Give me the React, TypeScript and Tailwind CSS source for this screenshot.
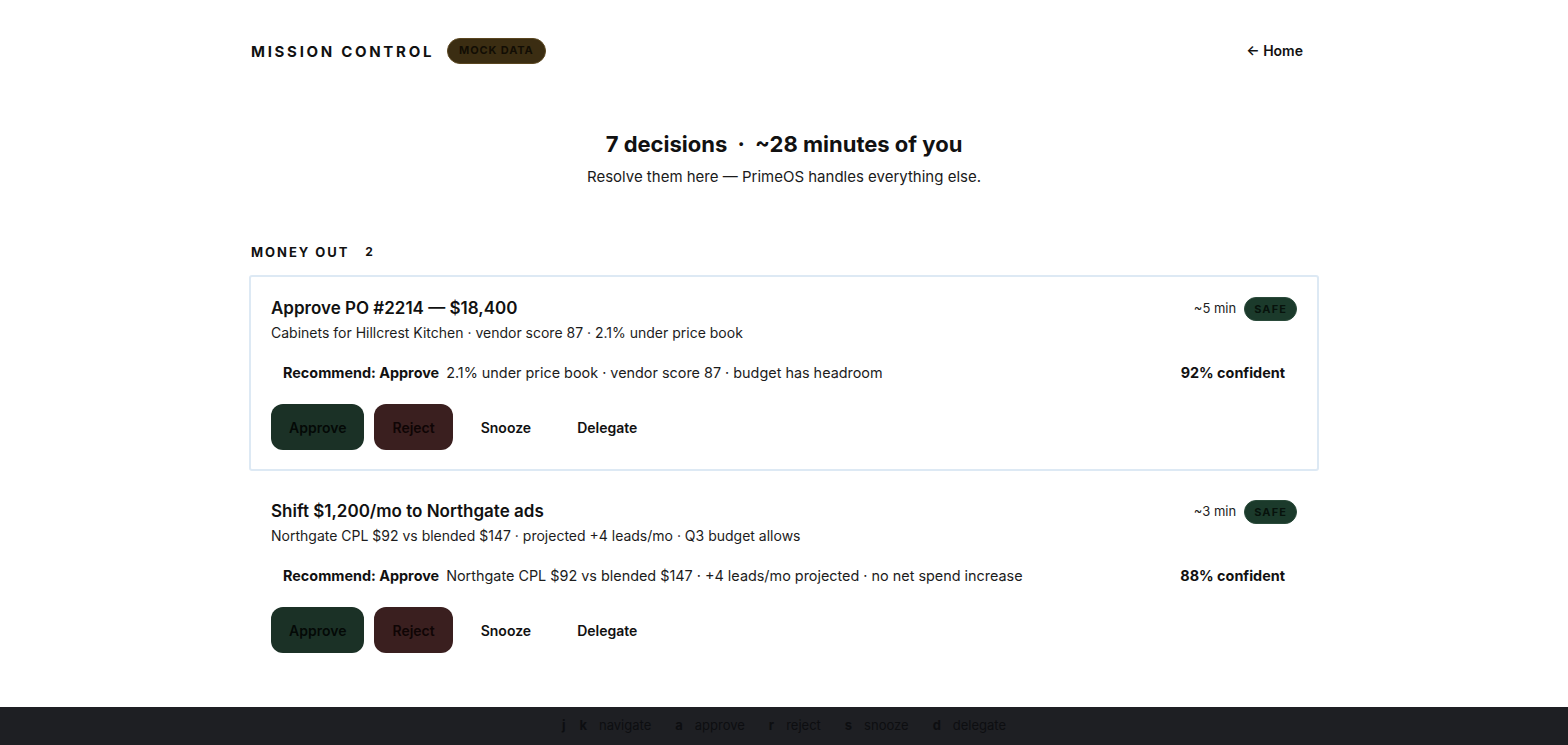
import { useState } from "react";

type Decision = {
    id: string;
    title: string;
    detail: string;
    minutes: number;
    risk: "SAFE";
    recommend: string;
    reason: string;
    confidence: number;
};

const decisions: Decision[] = [
    {
        id: "po-2214",
        title: "Approve PO #2214 — $18,400",
        detail: "Cabinets for Hillcrest Kitchen · vendor score 87 · 2.1% under price book",
        minutes: 5,
        risk: "SAFE",
        recommend: "Approve",
        reason: "2.1% under price book · vendor score 87 · budget has headroom",
        confidence: 92,
    },
    {
        id: "northgate-ads",
        title: "Shift $1,200/mo to Northgate ads",
        detail: "Northgate CPL $92 vs blended $147 · projected +4 leads/mo · Q3 budget allows",
        minutes: 3,
        risk: "SAFE",
        recommend: "Approve",
        reason: "Northgate CPL $92 vs blended $147 · +4 leads/mo projected · no net spend increase",
        confidence: 88,
    },
];

const shortcuts = [
    { keys: ["j", "k"], label: "navigate" },
    { keys: ["a"], label: "approve" },
    { keys: ["r"], label: "reject" },
    { keys: ["s"], label: "snooze" },
    { keys: ["d"], label: "delegate" },
];

const DecisionCard = ({ d, selected, onSelect }: { d: Decision; selected: boolean; onSelect: () => void }) => {
    return (
        <div
            onClick={onSelect}
            className={`border-2 rounded-[3px] px-[20px] pt-[19px] pb-[19px] ${selected ? "border-[#dde9f4]" : "border-transparent"}`}
        >
            <div className="flex flex-row items-start justify-between">
                <div>
                    <div className="text-[17px] leading-6 font-semibold text-[#111]">{d.title}</div>
                    <div className="text-[14px] leading-5 mt-[3px] text-[#1c1c1c]">{d.detail}</div>
                </div>
                <div className="flex flex-row items-center gap-2 pt-px">
                    <span className="text-[13px] text-[#222]">~{d.minutes} min</span>
                    <span className="h-6 px-[9px] rounded-full bg-[#1b3a2b] border border-[#2a4a3a] text-[11px] font-bold tracking-[0.1em] text-[#07120c] flex items-center">
                        {d.risk}
                    </span>
                </div>
            </div>
            {/* recommendation strip */}
            <div className="mt-3 px-3 py-2 flex flex-row items-center justify-between text-[14.4px] leading-5">
                <div className="flex flex-row gap-[7px]">
                    <span className="font-bold text-[#111]">Recommend: {d.recommend}</span>
                    <span className="text-[#1c1c1c]">{d.reason}</span>
                </div>
                <span className="font-bold text-[#111]">{d.confidence}% confident</span>
            </div>
            <div className="mt-[13px] flex flex-row gap-[10px] text-[14px] font-semibold">
                <button className="h-[46px] px-[18px] rounded-xl bg-[#1b3126] text-[#040906]">Approve</button>
                <button className="h-[46px] px-[18px] rounded-xl bg-[#3a1f1f] text-[#0f0505]">Reject</button>
                <button className="h-[46px] px-[18px] rounded-xl text-[#111]">Snooze</button>
                <button className="h-[46px] px-[18px] rounded-xl text-[#111]">Delegate</button>
            </div>
        </div>
    );
};

const App = () => {
    const [selected, setSelected] = useState(decisions[0].id);
    return (
        <div className="min-h-screen bg-white text-[#111] font-['Inter',sans-serif] pb-16">
            <div className="max-w-[1070px] mx-auto">
                <div className="flex flex-row items-center justify-between pt-[36px]">
                    <div className="flex flex-row items-center gap-[13px] pl-[2px]">
                        <span className="text-[15px] font-bold tracking-[0.18em] pt-[3px]">MISSION CONTROL</span>
                        <span className="h-[26px] px-[11px] rounded-full bg-[#3b2d12] border border-[#5a4620] text-[11px] font-bold tracking-[0.08em] text-[#120d04] flex items-center">
                            MOCK DATA
                        </span>
                    </div>
                    <a className="px-4 py-1 text-[14px] font-semibold">← Home</a>
                </div>

                <div className="mt-[63px] text-center">
                    <h1 className="text-[22px] leading-8 font-bold">
                        7 decisions <span className="mx-[5px]">·</span> ~28 minutes of you
                    </h1>
                    <p className="mt-[6px] text-[15px] leading-[22px] text-[#1a1a1a]">
                        Resolve them here — PrimeOS handles everything else.
                    </p>
                </div>

                <div className="mt-[54px] flex flex-row items-center gap-[16px] pl-[2px]">
                    <span className="text-[13px] leading-5 font-bold tracking-[0.15em]">MONEY OUT</span>
                    <span className="text-[12px] font-bold">2</span>
                </div>

                <div className="mt-[13px] flex flex-col gap-[7px]">
                    {decisions.map((d) => (
                        <DecisionCard key={d.id} d={d} selected={selected === d.id} onSelect={() => setSelected(d.id)} />
                    ))}
                </div>
            </div>

            {/* keyboard hint bar */}
            <div className="fixed bottom-0 left-0 right-0 h-[38px] bg-[#1e1f23] flex flex-row items-center justify-center gap-[24px] text-[13px] text-[#0d0e11]">
                {shortcuts.map((s) => (
                    <div key={s.label} className="flex flex-row items-center gap-3">
                        <div className="flex flex-row gap-[14px] font-bold">
                            {s.keys.map((k) => (
                                <kbd key={k} className="font-['Inter',sans-serif]">{k}</kbd>
                            ))}
                        </div>
                        <span>{s.label}</span>
                    </div>
                ))}
            </div>
        </div>
    );
};

export default App;
